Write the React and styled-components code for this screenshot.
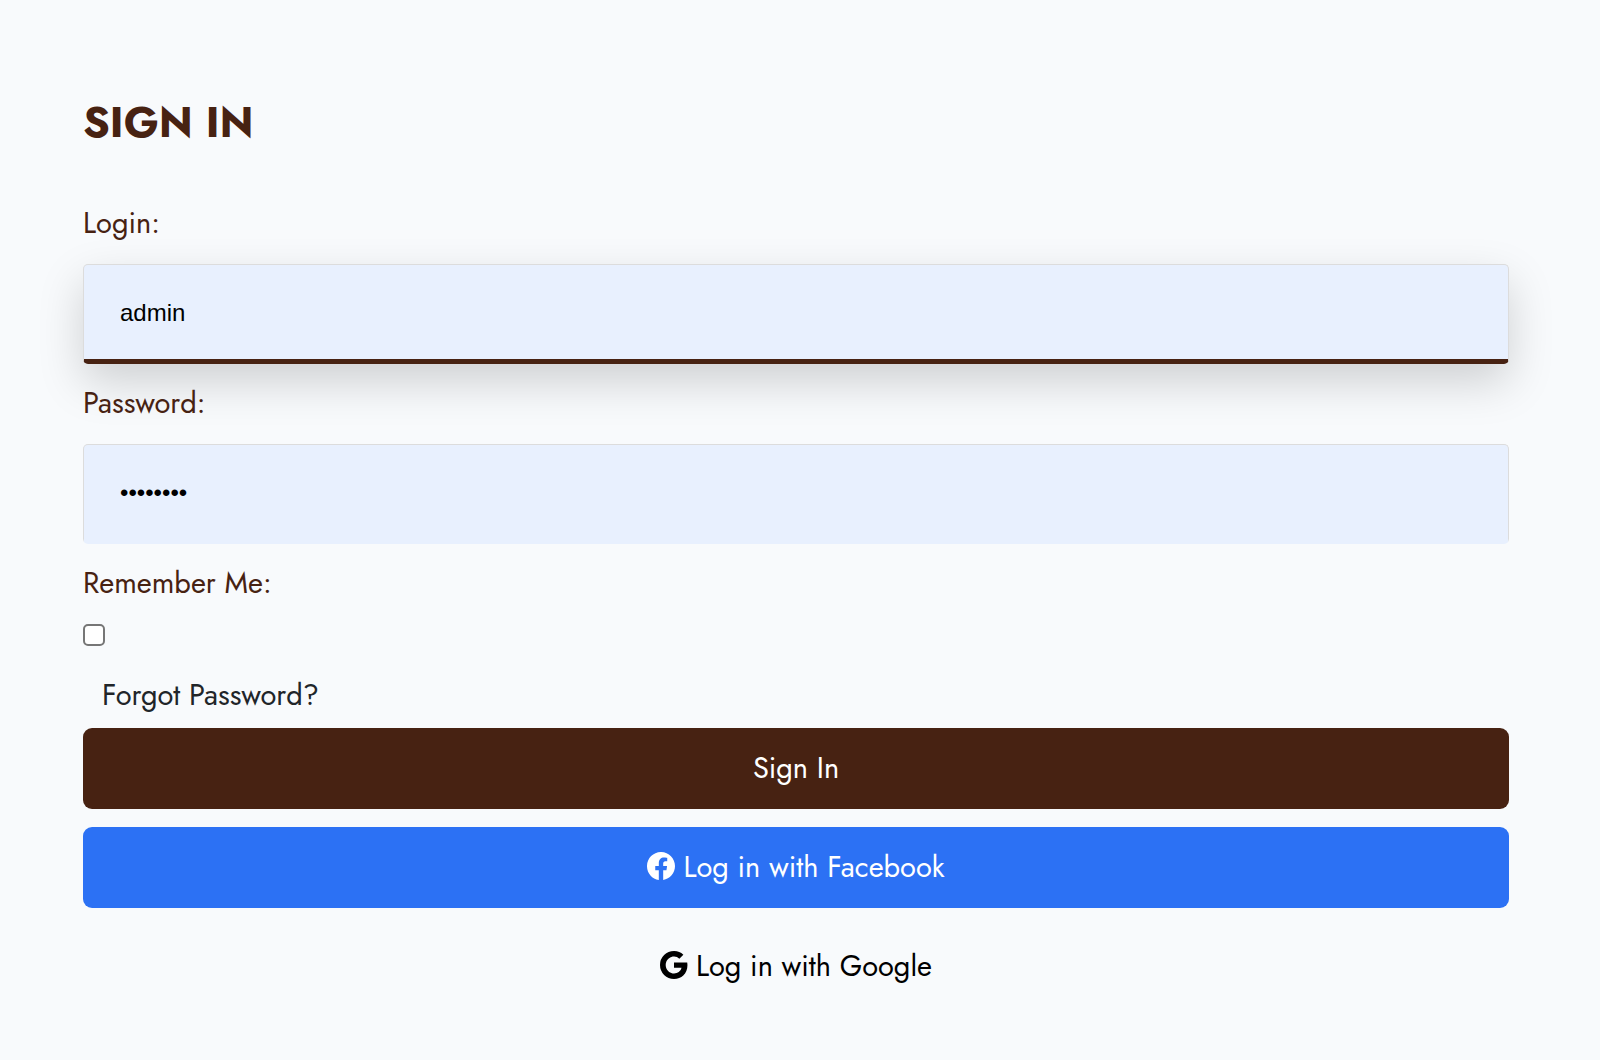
import React from "react";
import styled, { createGlobalStyle } from "styled-components";
import { BsFacebook, BsGoogle } from "react-icons/bs";

const GlobalStyle = createGlobalStyle`
  * { box-sizing: border-box; }
  body {
    margin: 0;
    background: #f8fafc;
    color: #212529;
    font-family: Jost, Lato, sans-serif;
    font-size: 29px;
    line-height: 43px;
  }
`;

const Page = styled.main`
  padding: 95px 91px 53px 83px;
`;

const Title = styled.h1`
  margin: 0 0 53px;
  color: #472212;
  font-size: 43px;
  font-weight: 700;
  line-height: 54px;
  text-transform: uppercase;
`;

const Form = styled.form`
  display: flex;
  flex-direction: column;
`;

const Field = styled.div`
  display: flex;
  flex-direction: column;
  gap: 19px;
  margin-bottom: 18px;
`;

const CheckField = styled(Field)`
  align-items: flex-start;
  margin-bottom: 28px;
`;

const Label = styled.label`
  color: #472212;
`;

const TextInput = styled.input`
  width: 100%;
  height: 100px;
  padding: 2px 36px 0;
  border: 1px solid #dcdcdc;
  border-bottom: 5px solid ${({ $active }) => ($active ? "#472212" : "#e8f0fe")};
  border-radius: 5px;
  outline: none;
  background: #e8f0fe;
  color: #000;
  font-family: "Liberation Sans", Arial, sans-serif;
  font-size: 24px;
  box-shadow: ${({ $active }) => ($active ? "0 18px 45px rgba(0, 0, 0, 0.17)" : "none")};
`;

const Checkbox = styled.input`
  appearance: none;
  width: 22px;
  height: 22px;
  margin: 0;
  border: 2px solid #767676;
  border-radius: 5px;
  background: #fff;

  &:checked {
    background: #472212;
  }
`;

const ForgotLink = styled.a`
  align-self: flex-start;
  margin: 0 19px 11px;
  color: #212529;
  text-decoration: none;
`;

const Actions = styled.div`
  display: flex;
  flex-direction: column;
  gap: 18px;
`;

const Button = styled.button`
  display: flex;
  align-items: center;
  justify-content: center;
  gap: 8px;
  height: 81px;
  padding: 0 20px;
  border: 0;
  border-radius: 9px;
  background: ${({ $background }) => $background};
  color: ${({ $color }) => $color};
  font: inherit;
  cursor: pointer;

  svg {
    margin-bottom: 3px;
  }
`;

export default function App() {
  return (
    <>
      <GlobalStyle />
      <Page>
        <Title>Sign In</Title>
        <Form onSubmit={(event) => event.preventDefault()}>
          <Field>
            <Label htmlFor="login">Login:</Label>
            <TextInput id="login" type="text" defaultValue="admin" $active />
          </Field>
          <Field>
            <Label htmlFor="password">Password:</Label>
            <TextInput id="password" type="password" defaultValue="password" />
          </Field>
          <CheckField>
            <Label htmlFor="remember">Remember Me:</Label>
            <Checkbox id="remember" type="checkbox" />
          </CheckField>
          <ForgotLink href="#forgot">Forgot Password?</ForgotLink>
          <Actions>
            <Button type="submit" $background="#472212" $color="#fff">Sign In</Button>
            <Button type="button" $background="#2c71f4" $color="#fff">
              <BsFacebook size={28} aria-hidden="true" />
              Log in with Facebook
            </Button>
            <Button type="button" $background="transparent" $color="#000">
              <BsGoogle size={28} aria-hidden="true" />
              Log in with Google
            </Button>
          </Actions>
        </Form>
      </Page>
    </>
  );
}
